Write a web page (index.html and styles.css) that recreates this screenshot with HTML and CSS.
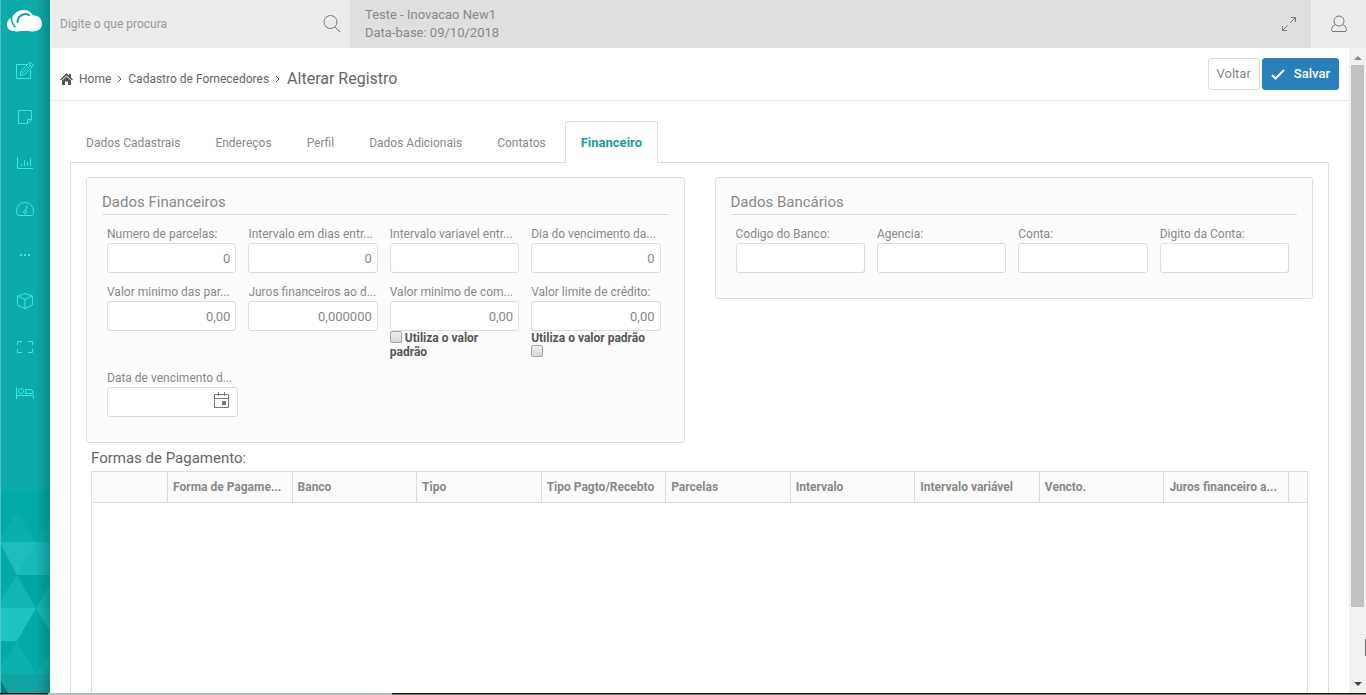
FILE: index.html
```html
<!DOCTYPE html>
<html lang="pt-BR">
<head>
<meta charset="utf-8">
<title>Cadastro de Fornecedores</title>
<link rel="stylesheet" href="styles.css">
</head>
<body>
<div class="app">
  <nav class="sidebar" aria-label="Menu principal">
    <a class="logo" href="#" aria-label="Início">
      <svg width="36" height="22" viewBox="0 0 36 22"><path fill="#fff" d="M7 21C2 21 0 18 0 14.500C0 11 2 8.500 5 7.500C7 3 12 0 17 0C21 0 24 2 26 5.500C32 5 35 9 35 14C35 18 32 21 28 21Q25 22 22 21H13Q10 22 7 21Z"/><path fill="none" stroke="#0ba5a4" stroke-width="1.500" stroke-linecap="round" d="M4.500 7Q4 12 8 17"/><path fill="none" stroke="#0ba5a4" stroke-width="2" stroke-linecap="round" d="M10.500 12Q11 6 16 4.500Q19 3.500 22 5"/></svg>
    </a>
    <a class="item" href="#" aria-label="Editar"><svg width="20" height="20" viewBox="0 0 20 20"><path d="M13 3.500H1.500V17.500H15.500V9M6 10L15 1L18.500 4.500L9.500 13.500L5 14.500ZM13.500 2.500L17 6M7 12.500L15 4.500"/></svg></a>
    <a class="item" href="#" aria-label="Notas"><svg width="20" height="20" viewBox="0 0 20 20"><path d="M3.500 3.500H16.500V13L12.500 16.500H3.500ZM12.500 16.500V12.500H16.500"/></svg></a>
    <a class="item" href="#" aria-label="Gráficos"><svg width="20" height="20" viewBox="0 0 20 20"><path d="M2.500 4V15.500H18M6.500 13V11M9.500 13V7M12.500 13V9M15.500 13V5"/></svg></a>
    <a class="item" href="#" aria-label="Painel"><svg width="20" height="20" viewBox="0 0 20 20"><path d="M3 16.500Q1.500 15 1.500 12A8.500 8.500 0 0 1 18.500 12Q18.500 15 17 16.500ZM12 6.500L10.500 11.500"/><circle cx="10" cy="13" r="1.500"/></svg></a>
    <a class="item" href="#" aria-label="Mais"><svg width="20" height="20" viewBox="0 0 20 20"><path stroke-width="2" d="M5 10H7M9 10H11M13 10H15"/></svg></a>
    <a class="item" href="#" aria-label="Produtos"><svg width="20" height="20" viewBox="0 0 20 20"><path d="M10 2.500L17.500 5V14L10 17.500L2.500 14V5ZM2.500 5L10 8.500L17.500 5M10 8.500V17.500"/></svg></a>
    <a class="item" href="#" aria-label="Tela"><svg width="20" height="20" viewBox="0 0 20 20"><path d="M7 4.500H2.500V8M13 4.500H17.500V8M2.500 12V15.500H7M17.500 12V15.500H13"/></svg></a>
    <a class="item" href="#" aria-label="Hospedagem"><svg width="20" height="20" viewBox="0 0 20 20"><path d="M1.500 4V16M1.500 12.500H18.500V16M10.500 10.500V6.500H15Q18 6.500 18 10.500Z"/><circle cx="6" cy="8" r="2.500"/></svg></a>
    <svg class="pattern" viewBox="0 0 50 202" preserveAspectRatio="none" aria-hidden="true">
      <rect width="50" height="202" fill="#02aaa9"/>
      <path fill="#08afad" d="M17 21L36 51H0V48ZM36 51L50 29V51Z"/>
      <path fill="#16b9b6" d="M0 51H50V84H17Z"/>
      <path fill="#1ebdb9" d="M0 51H36L17 84Z"/>
      <path fill="#00a7a7" d="M17 84H50L36 117Z"/>
      <path fill="#12b5b3" d="M17 84L36 117H0V110ZM36 117L50 95V117Z"/>
      <path fill="#1fc3c0" d="M0 117H36L17 150H0Z"/>
      <path fill="#17bab7" d="M36 117H50V140Z"/>
      <path fill="#0cb1af" d="M17 151L36 183H0V177ZM36 183L50 162V183Z"/>
      <path fill="#12a4a2" d="M0 183H50V202H0Z"/>
      <path fill="#08797a" d="M0 189L8 202H0Z"/>
    </svg>
  </nav>

  <div class="main">
    <header class="topbar">
      <form class="search">
        <input type="text" placeholder="Digite o que procura" aria-label="Pesquisar">
        <button type="button" aria-label="Buscar"><svg width="18" height="18" viewBox="0 0 18 18"><circle cx="7.500" cy="7" r="6.500"/><path d="M12 12L17 17"/></svg></button>
      </form>
      <div class="company"><div>Teste - Inovacao New1<br>Data-base: 09/10/2018</div>
        <button type="button" aria-label="Tela cheia"><svg width="16" height="16" viewBox="0 0 16 16"><path d="M1.500 14.500L6.500 9.500M9 7L14.500 1.500M10 1.500H14.500V6M1.500 10V14.500H6"/></svg></button>
      </div>
      <button class="user" type="button" aria-label="Usuário"><svg width="18" height="18" viewBox="0 0 18 18"><circle cx="9" cy="6" r="5"/><path d="M5.500 9.500Q1.500 11 1.500 14.500Q1.500 16.500 3 16.500H15Q16.500 16.500 16.500 14.500Q16.500 11 12.500 9.500"/></svg></button>
    </header>

    <div class="viewport">
      <main class="page">
        <div class="heading">
          <nav class="crumbs" aria-label="Trilha">
            <svg width="13" height="12" viewBox="0 0 13 12"><path fill="#555" d="M6.500 0L9 2.500V1H11V4.500L13 6.500L12 7.500L6.500 2.500L1 7.500L0 6.500ZM2 7.500L6.500 3.500L11 7.500V12H8V8.500H5V12H2Z"/></svg>
            <a href="#">Home</a><svg class="chev" width="5" height="8" viewBox="0 0 5 8"><path d="M1 1L4 4L1 7"/></svg><a href="#">Cadastro de Fornecedores</a><svg class="chev" width="5" height="8" viewBox="0 0 5 8"><path d="M1 1L4 4L1 7"/></svg><h1>Alterar Registro</h1>
          </nav>
          <div class="actions">
            <button class="btn" type="button">Voltar</button>
            <button class="btn primary" type="button"><svg width="14" height="11" viewBox="0 0 14 11"><path d="M1 6L4.500 9.500L13 1"/></svg>Salvar</button>
          </div>
        </div>

        <div class="content">
          <div class="tabs" role="tablist">
            <button type="button" role="tab">Dados Cadastrais</button>
            <button type="button" role="tab">Endereços</button>
            <button type="button" role="tab">Perfil</button>
            <button type="button" role="tab">Dados Adicionais</button>
            <button type="button" role="tab">Contatos</button>
            <button class="active" type="button" role="tab" aria-selected="true">Financeiro</button>
          </div>
          <div class="tabpanel" role="tabpanel">
            <div class="groups">
              <section class="group">
                <h2>Dados Financeiros</h2>
                <div class="fields">
                  <div class="field"><label for="f1">Numero de parcelas:</label><input id="f1" type="text" value="0"></div>
                  <div class="field"><label for="f2">Intervalo em dias entr...</label><input id="f2" type="text" value="0"></div>
                  <div class="field"><label for="f3">Intervalo variavel entr...</label><input id="f3" type="text"></div>
                  <div class="field"><label for="f4">Dia do vencimento da...</label><input id="f4" type="text" value="0"></div>
                  <div class="field"><label for="f5">Valor minimo das par...</label><input id="f5" type="text" value="0,00"></div>
                  <div class="field"><label for="f6">Juros financeiros ao d...</label><input id="f6" type="text" value="0,000000"></div>
                  <div class="field"><label for="f7">Valor minimo de com...</label><input id="f7" type="text" value="0,00">
                    <label class="check"><input type="checkbox"> Utiliza o valor<br>padrão</label></div>
                  <div class="field"><label for="f8">Valor limite de crédito:</label><input id="f8" type="text" value="0,00">
                    <label class="check">Utiliza o valor padrão<br><input type="checkbox"></label></div>
                  <div class="field"><label for="f9">Data de vencimento d...</label>
                    <div class="date"><input id="f9" type="text"><button type="button" aria-label="Abrir calendário"><svg width="15" height="16" viewBox="0 0 15 16"><path fill="none" stroke="#777" d="M.500 2.500H14.500V15.500H.500ZM.500 6.500H14.500M4.500 0V4M10.500 0V4"/><path fill="#777" d="M8 9H12V13H8Z"/></svg></button></div></div>
                </div>
              </section>
              <section class="group">
                <h2>Dados Bancários</h2>
                <div class="fields">
                  <div class="field"><label for="b1">Codigo do Banco:</label><input id="b1" type="text"></div>
                  <div class="field"><label for="b2">Agencia:</label><input id="b2" type="text"></div>
                  <div class="field"><label for="b3">Conta:</label><input id="b3" type="text"></div>
                  <div class="field"><label for="b4">Digito da Conta:</label><input id="b4" type="text"></div>
                </div>
              </section>
            </div>
            <section class="payments">
              <h2>Formas de Pagamento:</h2>
              <div class="grid">
                <table>
                  <colgroup><col class="first"><col span="9"><col class="last"></colgroup>
                  <thead><tr><th></th><th>Forma de Pagame...</th><th>Banco</th><th>Tipo</th><th>Tipo Pagto/Recebto</th><th>Parcelas</th><th>Intervalo</th><th>Intervalo variável</th><th>Vencto.</th><th>Juros financeiro a...</th><th></th></tr></thead>
                </table>
              </div>
            </section>
          </div>
        </div>
      </main>
      <div class="scrollbar" aria-hidden="true">
        <span class="up"></span><span class="thumb"></span><span class="down"></span><span class="edge"></span>
      </div>
    </div>
  </div>
</div>
<div class="bottomline"><span class="dark start"></span><span class="light"></span><span class="dark rest"></span></div>
</body>
</html>
```
FILE: styles.css
```css
* { box-sizing: border-box; }
body { margin: 0; height: 100vh; overflow: hidden; display: flex; flex-direction: column; background: #fff; font: 13px/18px Roboto, "Liberation Sans", sans-serif; color: #888; }
button, input { font: inherit; color: inherit; margin: 0; }
button { background: none; border: 0; padding: 0; }
a { color: inherit; text-decoration: none; }
svg { display: block; }
h1, h2 { margin: 0; font-weight: 400; font-size: 15px; }
.app { flex: 1; min-height: 0; display: flex; }

.sidebar { width: 50px; flex: none; display: flex; flex-direction: column; background: #0daaa9; position: relative; overflow: hidden; }
.sidebar::after { content: ""; position: absolute; inset: 0; pointer-events: none; border-left: 1px solid #4bc1c0; background: linear-gradient(to left, rgba(0,60,60,.28), rgba(0,60,60,0) 14px); }
.logo { height: 48px; padding: 10px 0 0 7px; }
.item { height: 46px; display: flex; align-items: center; justify-content: center; }
.item svg { fill: none; stroke: #35e8e3; }
.pattern { width: 100%; height: 202px; flex: none; margin-top: auto; }

.main { flex: 1; min-width: 0; display: flex; flex-direction: column; }
.topbar { height: 48px; flex: none; display: flex; background: #ececec; }
.topbar svg { fill: none; stroke: #777; }
.search { width: 300px; display: flex; align-items: center; padding: 0 9px 0 10px; }
.search input { flex: 1; min-width: 0; padding: 0; border: 0; background: none; font-size: 12px; }
.search input::placeholder { color: #999; opacity: 1; }
.company { flex: 1; display: flex; align-items: center; justify-content: space-between; padding: 0 14px 0 15px; background: #dfdfdf; }
.user { width: 55px; display: flex; align-items: center; justify-content: center; }

.viewport { flex: 1; min-height: 0; display: flex; }
.page { flex: 1; min-width: 0; overflow: hidden; display: flex; flex-direction: column; }
.heading { height: 53px; flex: none; display: flex; justify-content: space-between; align-items: center; padding: 0 10px; border-bottom: 1px solid #e5e5e5; }
.crumbs { display: flex; align-items: center; color: #666; padding-top: 10px; font-size: 12px; }
.crumbs a { margin-left: 6px; }
.crumbs h1 { margin-left: 7px; font-size: 16px; }
.chev { margin-left: 6px; fill: none; stroke: #555; }
.actions { display: flex; gap: 2px; }
.btn { height: 32px; display: flex; align-items: center; gap: 9px; padding: 0 8px; border: 1px solid #ddd; border-radius: 3px; background: #fff; font-size: 13px; }
.btn.primary { background: #2a7fb8; border-color: #2a7fb8; color: #fff; font-weight: 500; }
.btn svg { fill: none; stroke: #fff; stroke-width: 2; }

.content { flex: 1; min-height: 0; display: flex; flex-direction: column; padding: 20px 20px 0; }
.tabs { height: 42px; flex: none; display: flex; gap: 3px; position: relative; z-index: 1; margin-bottom: -1px; }
.tabs button { padding: 0 15px; border: 1px solid transparent; border-bottom: 0; border-radius: 3px 3px 0 0; font-size: 12px; }
.tabs .active { border-color: #ddd; background: #fff; color: #1d9c9b; font-weight: 700; font-size: 13px; }
.tabpanel { flex: 1; min-height: 0; display: flex; flex-direction: column; padding: 14px 15px 0; border: 1px solid #ddd; border-bottom: 0; }
.groups { display: grid; grid-template-columns: 1fr 1fr; gap: 30px; align-items: start; }
.group { min-width: 0; padding: 15px 15px 25px; border: 1px solid #ddd; border-radius: 3px; background: #fcfcfc; }
.group h2 { line-height: 18px; padding-bottom: 3px; border-bottom: 1px solid #ddd; }
.fields { display: grid; grid-template-columns: repeat(4, minmax(0, 1fr)); gap: 10px 12px; padding: 10px 8px 0 5px; }
.field > label { display: block; white-space: nowrap; font-size: 12px; }
.field input[type="text"] { display: block; width: 100%; height: 30px; padding: 0 5px; border: 1px solid #ddd; border-radius: 3px; background: #fff; text-align: right; }
.field .check { height: 28px; color: #555; font-weight: 700; line-height: 14px; }
.check input { appearance: none; width: 12px; height: 12px; border: 1px solid #a5a5a5; border-radius: 2px; background: linear-gradient(#eee, #d8d8d8); vertical-align: top; }
.date { position: relative; margin-right: -2px; }
.date button { position: absolute; right: 9px; top: 5px; }

.payments { flex: 1; min-height: 0; display: flex; flex-direction: column; padding: 5px 5px 0; }
.payments h2 { line-height: 21px; padding-bottom: 2px; color: #666; }
.grid { flex: 1; border: 1px solid #ddd; border-bottom: 0; }
table { width: 100%; table-layout: fixed; border-collapse: separate; border-spacing: 0; }
.first { width: 76px; }
.last { width: 18px; }
th { height: 31px; padding: 0 0 0 5px; background: #fbfbfb; border-bottom: 1px solid #ddd; border-right: 1px solid #ddd; text-align: left; font-size: 12px; font-weight: 700; white-space: nowrap; }
th:last-child { border-right: 0; }

.scrollbar { width: 17px; flex: none; display: flex; flex-direction: column; align-items: center; background: #f1f1f1; position: relative; }
.up, .down { border: 4px solid transparent; }
.up { border-top: 0; border-bottom-color: #888; margin: 8px 0 5px; }
.down { border-bottom: 0; border-top-color: #444; margin: auto 0 7px; }
.thumb { width: 13px; height: 84%; background: #c1c1c1; }
.edge { position: absolute; right: 0; bottom: 37px; width: 1px; height: 17px; background: #666; }

.bottomline { height: 2px; flex: none; display: flex; }
.dark { background: linear-gradient(#151515 50%, #777a74 50%); }
.light { background: #b9bcbc; width: 344px; }
.start { width: 48px; }
.rest { flex: 1; }
```
